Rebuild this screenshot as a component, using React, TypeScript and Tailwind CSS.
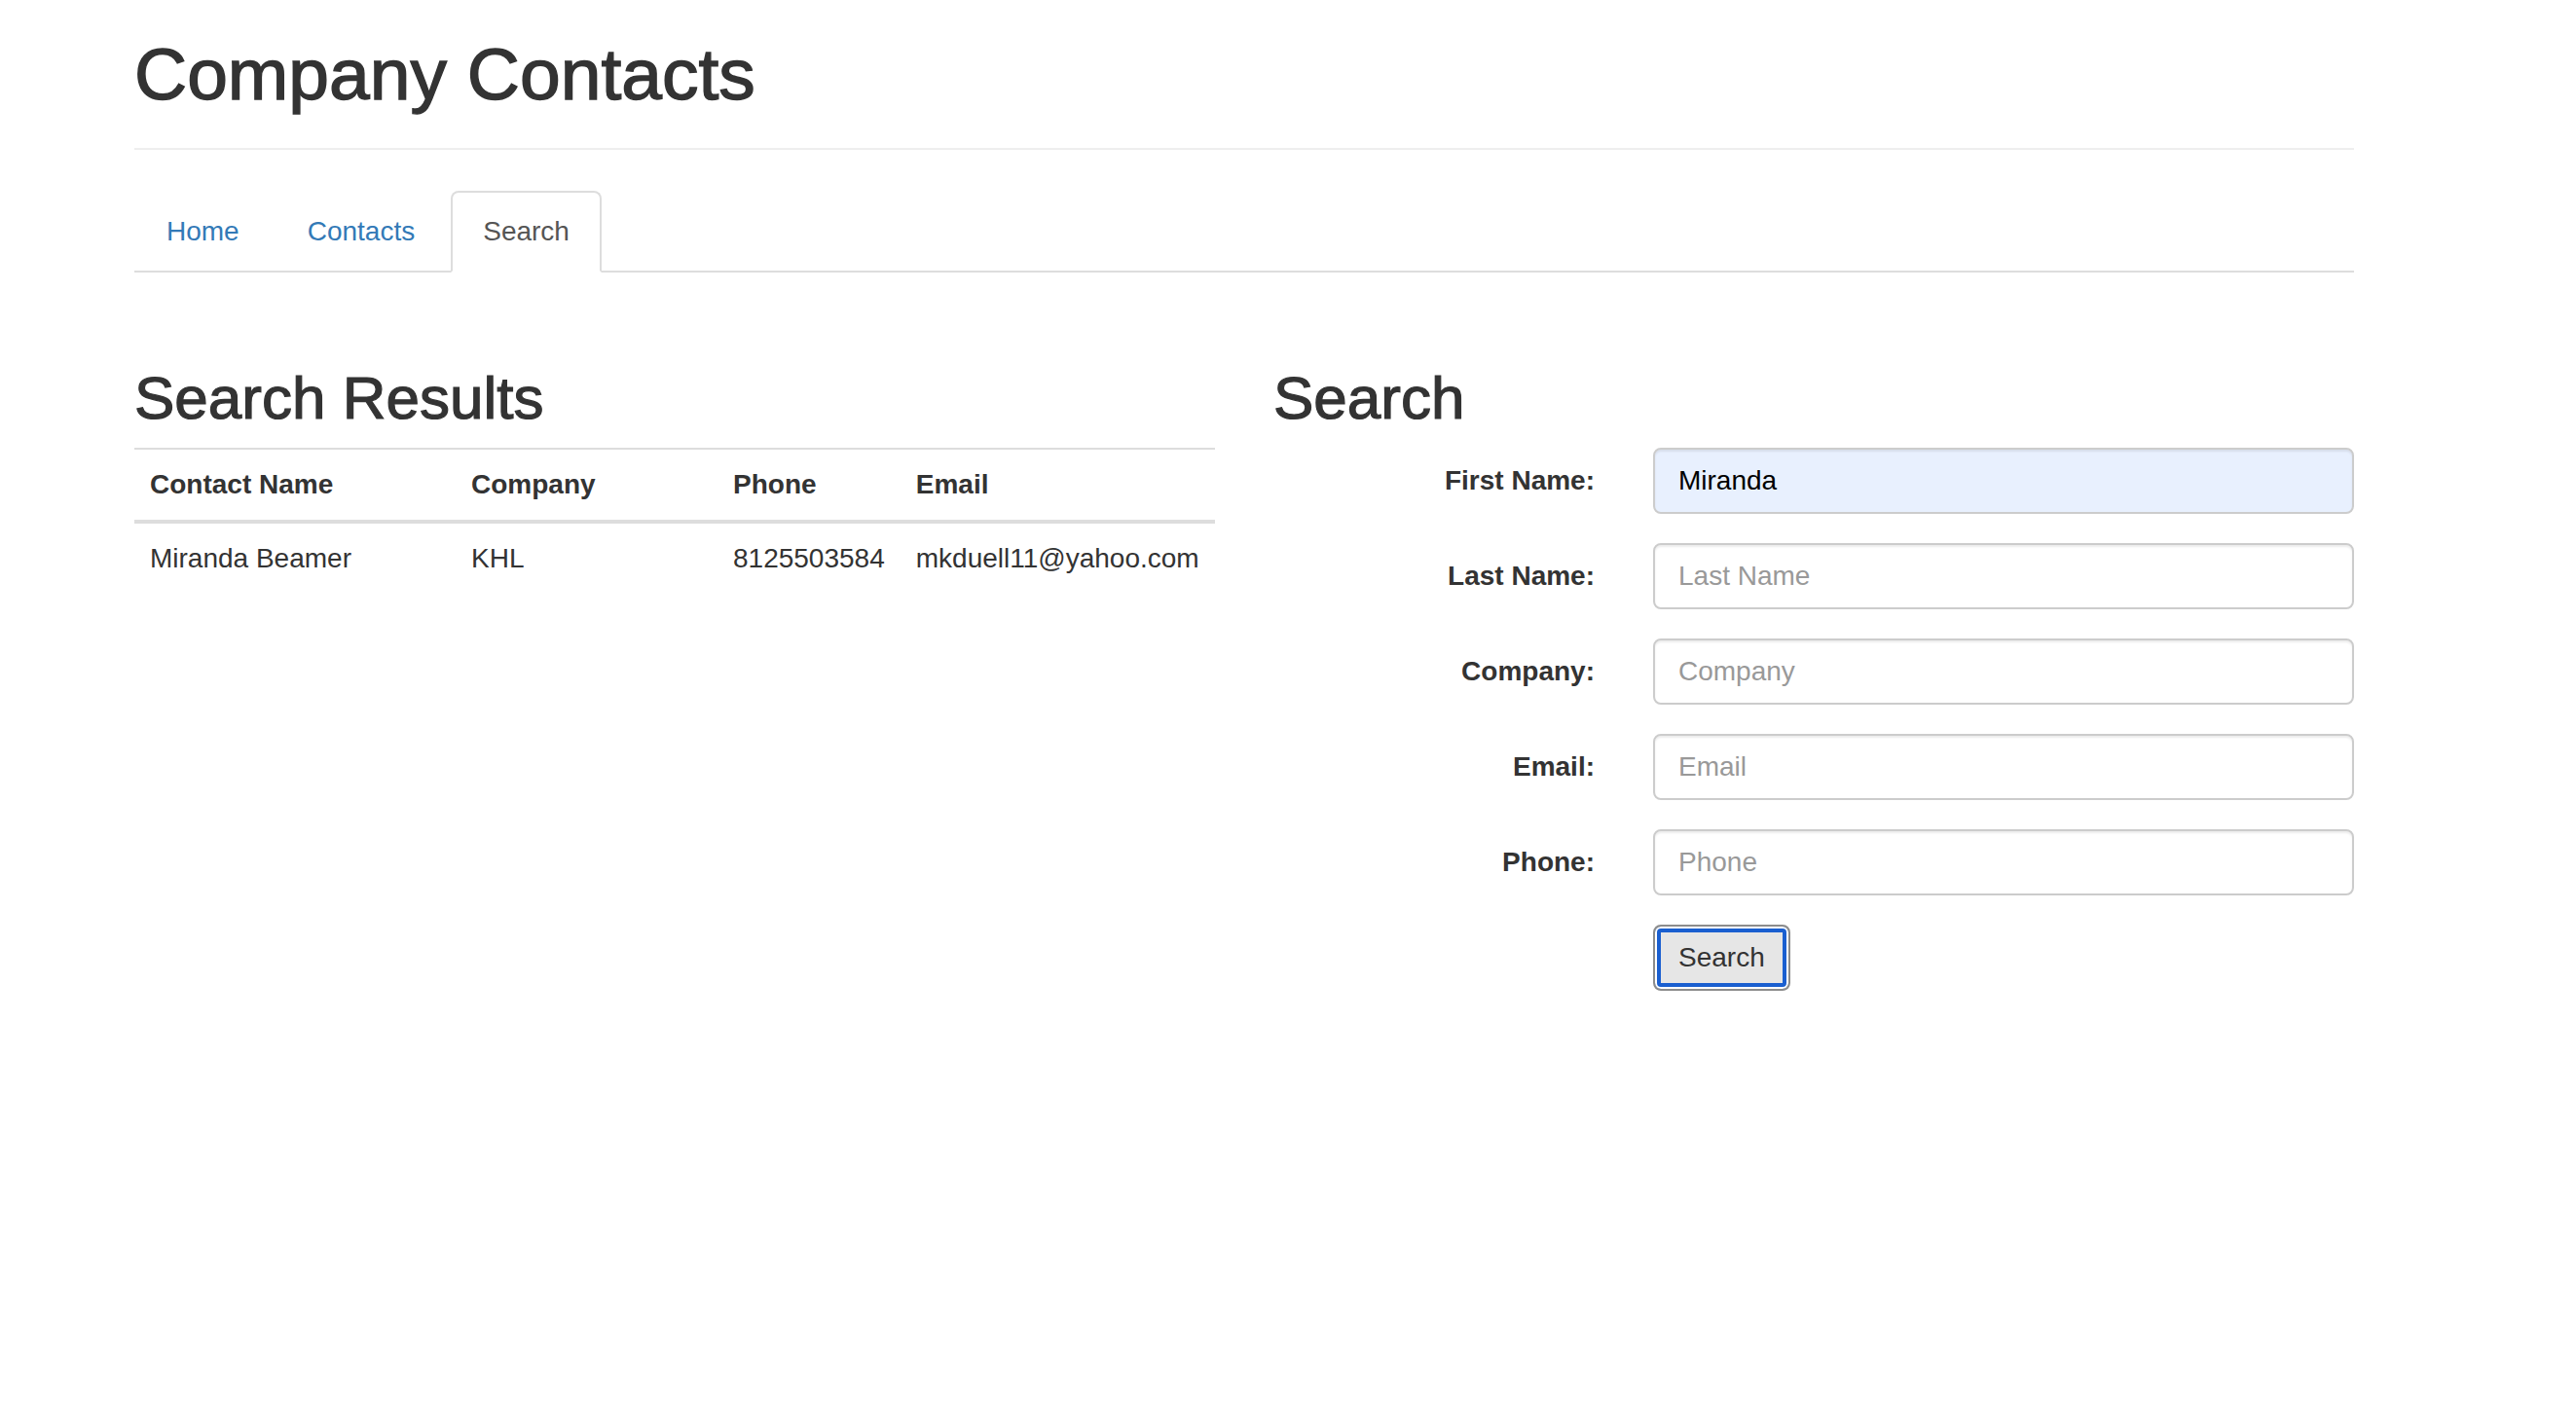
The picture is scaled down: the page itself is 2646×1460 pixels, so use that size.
const tabs = [
  { label: "Home", active: false },
  { label: "Contacts", active: false },
  { label: "Search", active: true },
];

const results = [
  {
    name: "Miranda Beamer",
    company: "KHL",
    phone: "8125503584",
    email: "mkduell11@yahoo.com",
  },
];

const fields = [
  { label: "First Name:", placeholder: "First Name", value: "Miranda" },
  { label: "Last Name:", placeholder: "Last Name", value: "" },
  { label: "Company:", placeholder: "Company", value: "" },
  { label: "Email:", placeholder: "Email", value: "" },
  { label: "Phone:", placeholder: "Phone", value: "" },
];

export default function App() {
  return (
    <div className="min-h-screen bg-white font-['Liberation_Sans','Helvetica_Neue',Arial,sans-serif] text-[28px] leading-[40px] text-[#333]">
      <div className="ml-[138px] w-[2280px] pt-[36px]">
        {/* medium weight faked with a thin stroke */}
        <h1 className="text-[75px] font-medium leading-[80px] [-webkit-text-stroke:1.4px_#333]">
          Company Contacts
        </h1>
        <hr className="mt-[36px] border-0 border-t-2 border-[#eee]" />

        <ul className="mt-[42px] flex border-b-2 border-[#ddd]">
          {tabs.map((t) => (
            <li key={t.label} className="-mb-[2px]">
              <a
                href="#"
                className={
                  t.active
                    ? "mr-[4px] block rounded-t-[8px] border-2 border-[#ddd] border-b-white bg-white px-[31px] py-[20px] text-[#555]"
                    : "mr-[4px] block rounded-t-[8px] border-2 border-transparent px-[31px] py-[20px] text-[#337ab7]"
                }
              >
                {t.label}
              </a>
            </li>
          ))}
        </ul>

        <div className="mt-[96px] flex gap-[60px]">
          {/* results */}
          <div className="w-[1110px]">
            <h2 className="text-[62px] font-medium leading-[66px] [-webkit-text-stroke:1.2px_#333]">
              Search Results
            </h2>
            <table className="mt-[18px] w-full border-collapse text-left">
              <thead>
                <tr className="border-t-2 border-[#ddd]">
                  <th className="w-[330px] border-b-4 border-[#ddd] p-4 font-bold">Contact Name</th>
                  <th className="w-[269px] border-b-4 border-[#ddd] p-4 font-bold">Company</th>
                  <th className="w-[187px] border-b-4 border-[#ddd] p-4 font-bold">Phone</th>
                  <th className="border-b-4 border-[#ddd] p-4 font-bold">Email</th>
                </tr>
              </thead>
              <tbody>
                {results.map((r) => (
                  <tr key={r.email}>
                    <td className="p-4">{r.name}</td>
                    <td className="p-4">{r.company}</td>
                    <td className="p-4">{r.phone}</td>
                    <td className="p-4">{r.email}</td>
                  </tr>
                ))}
              </tbody>
            </table>
          </div>

          {/* search form */}
          <div className="w-[1110px]">
            <h2 className="text-[62px] font-medium leading-[66px] [-webkit-text-stroke:1.2px_#333]">Search</h2>
            <form className="mt-[18px]" onSubmit={(e) => e.preventDefault()}>
              {fields.map((f) => (
                <div key={f.label} className="mb-[30px] flex items-start gap-[60px]">
                  <label className="w-[330px] pt-[14px] text-right font-bold">{f.label}</label>
                  <input
                    type="text"
                    defaultValue={f.value}
                    placeholder={f.placeholder}
                    className={
                      f.value
                        ? "h-[68px] w-[720px] rounded-[8px] border-2 border-[#ccc] bg-[#e8f0fe] px-[24px] py-[12px] text-[28px] text-black shadow-[inset_0_2px_2px_rgba(0,0,0,0.075)] outline-none"
                        : "h-[68px] w-[720px] rounded-[8px] border-2 border-[#ccc] bg-white px-[24px] py-[12px] text-[28px] text-[#555] shadow-[inset_0_2px_2px_rgba(0,0,0,0.075)] outline-none placeholder:text-[#999]"
                    }
                  />
                </div>
              ))}
              <div className="ml-[390px]">
                <button
                  type="submit"
                  className="h-[68px] rounded-[8px] border-2 border-[#8c8c8c] bg-[#e6e6e6] px-[24px] text-[28px] leading-[40px] text-[#333] shadow-[inset_0_0_0_2px_#fff,inset_0_0_0_6px_#1a5fd0]"
                >
                  Search
                </button>
              </div>
            </form>
          </div>
        </div>
      </div>
    </div>
  );
}
